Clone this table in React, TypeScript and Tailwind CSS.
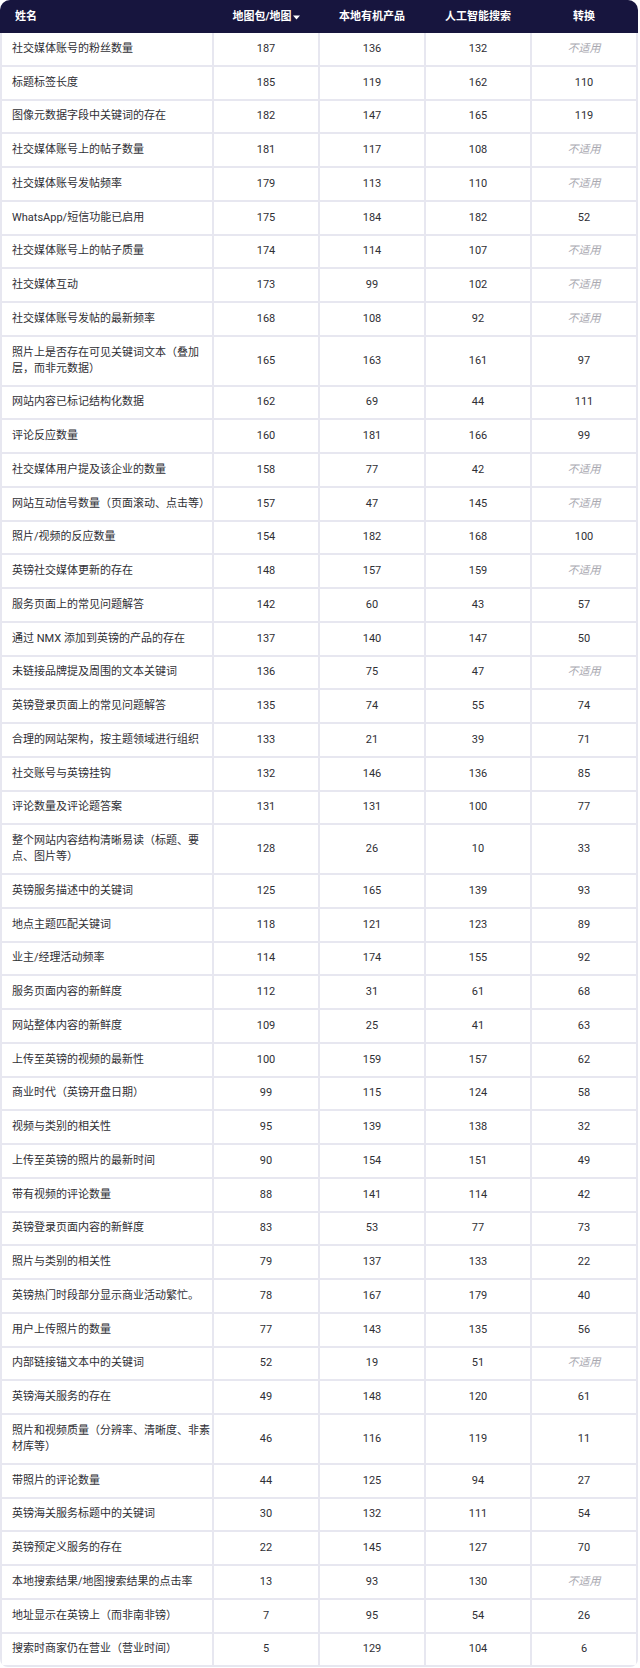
import React from 'react';

type Row = [string, number, number, number, number | null];

const rows: Row[] = [
    ['社交媒体账号的粉丝数量', 187, 136, 132, null],
    ['标题标签长度', 185, 119, 162, 110],
    ['图像元数据字段中关键词的存在', 182, 147, 165, 119],
    ['社交媒体账号上的帖子数量', 181, 117, 108, null],
    ['社交媒体账号发帖频率', 179, 113, 110, null],
    ['WhatsApp/短信功能已启用', 175, 184, 182, 52],
    ['社交媒体账号上的帖子质量', 174, 114, 107, null],
    ['社交媒体互动', 173, 99, 102, null],
    ['社交媒体账号发帖的最新频率', 168, 108, 92, null],
    ['照片上是否存在可见关键词文本（叠加层，而非元数据）', 165, 163, 161, 97],
    ['网站内容已标记结构化数据', 162, 69, 44, 111],
    ['评论反应数量', 160, 181, 166, 99],
    ['社交媒体用户提及该企业的数量', 158, 77, 42, null],
    ['网站互动信号数量（页面滚动、点击等）', 157, 47, 145, null],
    ['照片/视频的反应数量', 154, 182, 168, 100],
    ['英镑社交媒体更新的存在', 148, 157, 159, null],
    ['服务页面上的常见问题解答', 142, 60, 43, 57],
    ['通过 NMX 添加到英镑的产品的存在', 137, 140, 147, 50],
    ['未链接品牌提及周围的文本关键词', 136, 75, 47, null],
    ['英镑登录页面上的常见问题解答', 135, 74, 55, 74],
    ['合理的网站架构，按主题领域进行组织', 133, 21, 39, 71],
    ['社交账号与英镑挂钩', 132, 146, 136, 85],
    ['评论数量及评论题答案', 131, 131, 100, 77],
    ['整个网站内容结构清晰易读（标题、要点、图片等）', 128, 26, 10, 33],
    ['英镑服务描述中的关键词', 125, 165, 139, 93],
    ['地点主题匹配关键词', 118, 121, 123, 89],
    ['业主/经理活动频率', 114, 174, 155, 92],
    ['服务页面内容的新鲜度', 112, 31, 61, 68],
    ['网站整体内容的新鲜度', 109, 25, 41, 63],
    ['上传至英镑的视频的最新性', 100, 159, 157, 62],
    ['商业时代（英镑开盘日期）', 99, 115, 124, 58],
    ['视频与类别的相关性', 95, 139, 138, 32],
    ['上传至英镑的照片的最新时间', 90, 154, 151, 49],
    ['带有视频的评论数量', 88, 141, 114, 42],
    ['英镑登录页面内容的新鲜度', 83, 53, 77, 73],
    ['照片与类别的相关性', 79, 137, 133, 22],
    ['英镑热门时段部分显示商业活动繁忙。', 78, 167, 179, 40],
    ['用户上传照片的数量', 77, 143, 135, 56],
    ['内部链接锚文本中的关键词', 52, 19, 51, null],
    ['英镑海关服务的存在', 49, 148, 120, 61],
    ['照片和视频质量（分辨率、清晰度、非素材库等）', 46, 116, 119, 11],
    ['带照片的评论数量', 44, 125, 94, 27],
    ['英镑海关服务标题中的关键词', 30, 132, 111, 54],
    ['英镑预定义服务的存在', 22, 145, 127, 70],
    ['本地搜索结果/地图搜索结果的点击率', 13, 93, 130, null],
    ['地址显示在英镑上（而非南非镑）', 7, 95, 54, 26],
    ['搜索时商家仍在营业（营业时间）', 5, 129, 104, 6],
];

const cols = 'grid grid-cols-[210px_104px_104px_104px_104px] gap-[2px]';

function Cell({ value }: { value: number | null }) {
    return (
        <div className="bg-white flex items-center justify-center py-[7.875px]">
            {value === null
                ? <span className="italic text-[#a8a8b0]">不适用</span>
                : <span>{value}</span>}
        </div>
    );
}

export default function App() {
    return (
        <div className="w-[640px] bg-white" style={{ fontFamily: "Roboto, 'Noto Sans CJK SC', sans-serif" }}>
            <div className="w-[638px] bg-[#e7e7f0] rounded-t-[10px] rounded-b-[8px] overflow-hidden text-[11px] leading-[16px] text-[#2f2f35]">
                {/* Header */}
                <div className={`${cols} bg-[#17153e] h-[33px] px-[2px] text-white font-bold`}>
                    <div className="flex items-center pl-[13px]">姓名</div>
                    <div className="flex items-center justify-center gap-[1px]">
                        地图包/地图
                        <svg width="7" height="5" viewBox="0 0 7 5" className="mt-[1px]">
                            <path d="M0 0.5 L7 0.5 L3.5 4.5 Z" fill="white" />
                        </svg>
                    </div>
                    <div className="flex items-center justify-center">本地有机产品</div>
                    <div className="flex items-center justify-center">人工智能搜索</div>
                    <div className="flex items-center justify-center">转换</div>
                </div>

                {/* Body */}
                <div className={`${cols} px-[2px] pb-[2px]`}>
                    {rows.map(([name, a, b, c, d]) => (
                        <React.Fragment key={name}>
                            <div className="bg-white flex items-center py-[7.875px] pl-[10px] pr-[2px]">{name}</div>
                            <Cell value={a} />
                            <Cell value={b} />
                            <Cell value={c} />
                            <Cell value={d} />
                        </React.Fragment>
                    ))}
                </div>
            </div>
        </div>
    );
}
